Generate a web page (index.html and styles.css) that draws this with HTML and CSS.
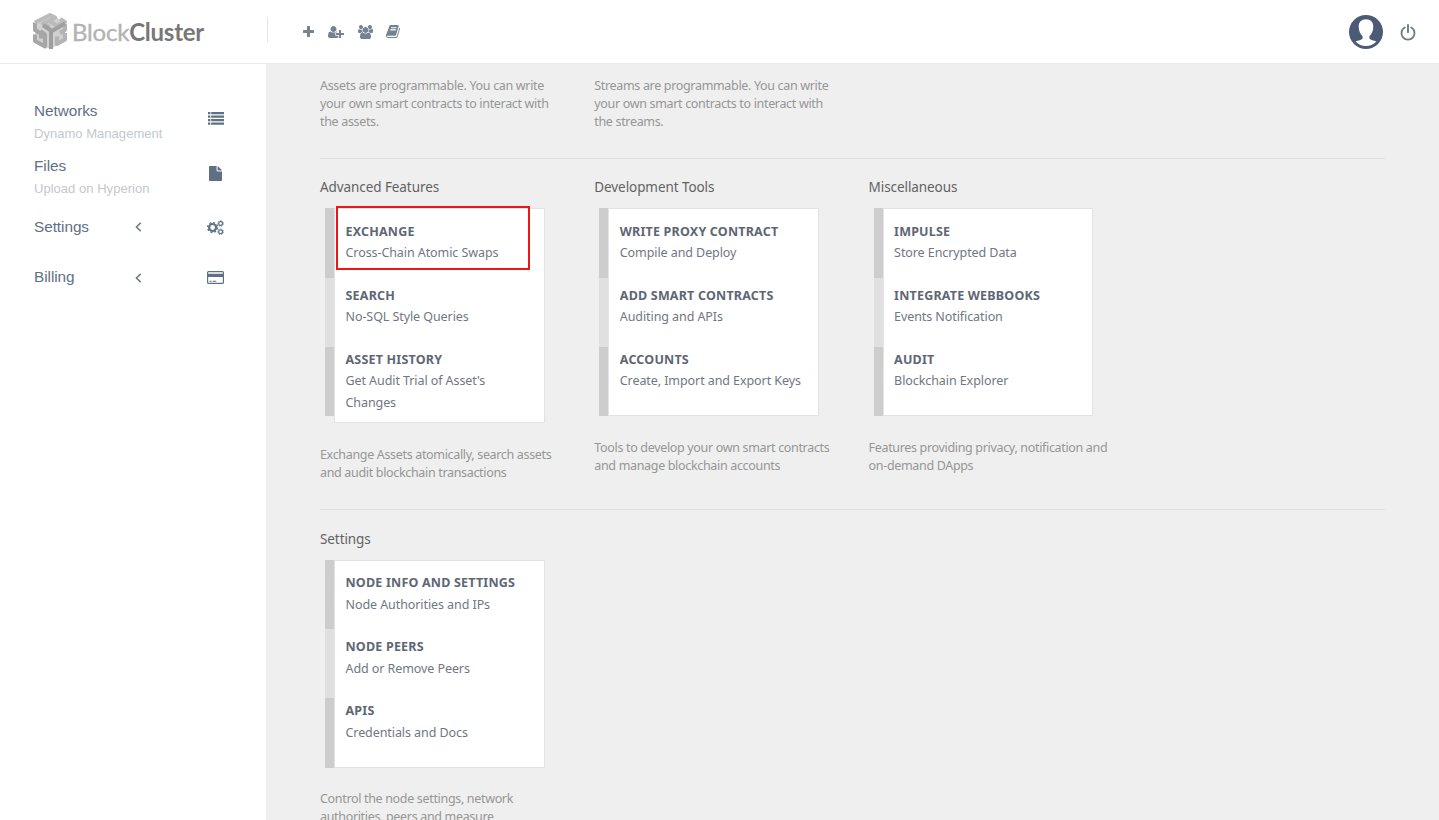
FILE: index.html
```html
<!DOCTYPE html>
<html lang="en">
<head>
<meta charset="utf-8">
<title>BlockCluster</title>
<link rel="stylesheet" href="styles.css">
</head>
<body>
<header class="topbar">
  <a class="logo">
    <svg class="cube" viewBox="0 0 34 38">
      <path fill="#d0d0d0" d="M17 1 32 9v19L17 36 2 28V9z"/>
      <g fill="none" stroke-width="4" stroke-linejoin="round">
        <path stroke="#a6a6a6" d="M2 9.500V17l6 3.500v5M2 21.500V28l10 5.500v-12L7.500 18"/>
        <path stroke="#b3b3b3" d="M24 23.500V31l8-4.500V20M32 11v6l-5 3"/>
        <path stroke="#bababa" d="M2 9.500 17 2l5 2.500-12 6L17 14M17 8.500l6.500 4L32 9l-5-3"/>
        <path stroke="#9f9f9f" d="M10 12l8 5.500V36M32 10.500 18 18.500"/>
      </g>
    </svg>
    <span class="word"><span class="word-light">Block</span><span class="word-dark">Cluster</span></span>
  </a>
  <nav class="tools">
    <svg class="t-plus" viewBox="192 128 1408 1408"><path d="M1600 736v192q0 40-28 68t-68 28h-416v416q0 40-28 68t-68 28h-192q-40 0-68-28t-28-68v-416h-416q-40 0-68-28t-28-68v-192q0-40 28-68t68-28h416v-416q0-40 28-68t68-28h192q40 0 68 28t28 68v416h416q40 0 68 28t28 68z"/></svg>
    <svg class="t-userplus" viewBox="0 128 2048 1536"><path d="M704 896q-159 0-271.500-112.500t-112.500-271.500 112.500-271.500 271.500-112.500 271.500 112.500 112.500 271.500-112.500 271.500-271.500 112.500zm960 128h352q13 0 22.500 9.500t9.500 22.500v192q0 13-9.500 22.500t-22.500 9.500h-352v352q0 13-9.500 22.500t-22.500 9.500h-192q-13 0-22.500-9.500t-9.500-22.500v-352h-352q-13 0-22.500-9.500t-9.500-22.500v-192q0-13 9.500-22.500t22.500-9.500h352v-352q0-13 9.500-22.500t22.500-9.500h192q13 0 22.500 9.500t9.500 22.500v352zm-736 224q0 52 38 90t90 38h256v238q-68 50-171 50h-874q-121 0-194-69t-73-190q0-53 3.500-103.500t14-109 26.500-108.500 43-97.500 62-81 85.500-53.500 111.500-20q19 0 39 17 79 61 154.500 91.500t164.500 30.500 164.500-30.500 154.500-91.500q20-17 39-17 132 0 217 96h-223q-52 0-90 38t-38 90v192z"/></svg>
    <svg class="t-users" viewBox="0 0 1920 1792"><path d="M593 896q-162 5-265 128h-134q-82 0-138-40.500t-56-118.500q0-353 124-353 6 0 43.500 21t97.500 42.500 119 21.500q67 0 133-23-5 37-5 66 0 159 93 293zm1071 637q0 120-73 189.500t-194 69.500h-874q-121 0-194-69.500t-73-189.500q0-53 3.500-103.500t14-109 26.500-108.500 43-97.500 62-81 85.500-53.500 111.500-20q10 0 43 21.500t73 48 107 48 135 21.500 135-21.500 107-48 73-48 43-21.500q61 0 111.500 20t85.500 53.500 62 81 43 97.500 26.500 108.500 14 109 3.500 103.500zm-1024-1277q0 106-75 181t-181 75-181-75-75-181 75-181 181-75 181 75 75 181zm704 384q0 159-112.500 271.500t-271.500 112.500-271.500-112.500-112.500-271.500 112.500-271.500 271.500-112.500 271.500 112.500 112.500 271.500zm576 225q0 78-56 118.500t-138 40.500h-134q-103-123-265-128 93-134 93-293 0-29-5-66 66 23 133 23 59 0 119-21.500t97.500-42.500 43.500-21q124 0 124 353zm-128-609q0 106-75 181t-181 75-181-75-75-181 75-181 181-75 181 75 75 181z"/></svg>
    <svg class="t-book" viewBox="0 128 1664 1536"><path d="M1639 478q40 57 18 129l-275 906q-19 64-76.500 107.500t-122.500 43.500h-923q-77 0-148.500-53.500t-99.500-131.500q-24-67-2-127 0-4 3-27t4-37q1-8-3-21.500t-3-19.500q2-11 8-21t16.500-23.500 16.500-23.500q23-38 45-91.500t30-91.500q3-10 .5-30t-.5-28q3-11 17-28t17-23q21-36 42-92t25-90q1-9-2.500-32t.5-28q4-13 22-30.500t22-22.500q19-26 42.500-84.500t27.500-96.500q1-8-3-25.500t-2-26.500q2-8 9-18t18-23 17-21q8-12 16.500-30.500t15-35 16-36 19.500-32 26.500-23.500 36-11.500 47.500 5.500l-1 3q38-9 51-9h761q74 0 114 56t18 130l-274 906q-36 119-71.500 153.500t-128.500 34.500h-869q-27 0-38 15-11 16-1 43 24 70 144 70h923q29 0 56-15.500t35-41.500l300-987q7-22 5-57 38 15 59 43zm-1064 2q-4 13 2 22.500t20 9.500h608q13 0 25.500-9.500t16.500-22.500l21-64q4-13-2-22.500t-20-9.500h-608q-13 0-25.500 9.500t-16.500 22.500zm-83 256q-4 13 2 22.500t20 9.500h608q13 0 25.500-9.500t16.500-22.500l21-64q4-13-2-22.500t-20-9.500h-608q-13 0-25.500 9.500t-16.500 22.500z"/></svg>
  </nav>
  <div class="account">
    <svg class="avatar" viewBox="0 0 34 34"><circle cx="17" cy="17" r="17" fill="#4b5b76"/><path fill="#fff" d="M17 4.300c-4.600 0-7.300 3-7.300 7.200 0 4.600 1.700 7.400 3.900 9.800v2.300c-1.200 1.900-4.300 1.900-7 2.800 2.200 2.600 6 4.500 10.400 4.500s8.200-1.900 10.400-4.500c-2.700-.9-5.800-.9-7-2.800v-2.300c2.200-2.400 3.900-5.200 3.900-9.800 0-4.200-2.700-7.200-7.300-7.200z"/></svg>
    <svg class="power" viewBox="0 0 16 17"><path d="M4.700 3.500a6.500 6.500 0 1 0 6.600 0M8 1v7.300" fill="none" stroke="#6d7b8c" stroke-width="1.900" stroke-linecap="round"/></svg>
  </div>
</header>
<div class="page">
  <aside class="sidebar">
    <a class="nav nav-double">
      <span class="nav-label">Networks<small>Dynamo Management</small></span>
      <svg class="i-list" viewBox="0 0 16 13"><path d="M0 0h2.400v2.200H0zM3.200 0H16v2.200H3.200zM0 3.500h2.400v2.200H0zM3.200 3.500H16v2.200H3.200zM0 7h2.400v2.200H0zM3.200 7H16v2.200H3.200zM0 10.500h2.400v2.200H0zM3.200 10.500H16v2.200H3.200z"/></svg>
    </a>
    <a class="nav nav-double">
      <span class="nav-label">Files<small>Upload on Hyperion</small></span>
      <svg class="i-file" viewBox="0 0 13 15"><path d="M.8 0H7.600V4.600q0 .8.800.8H13V14.200q0 .8-.8.800H.8q-.8 0-.8-.8V.8Q0 0 .8 0zM8.600.1q.3.100.6.400l3.300 3.300q.3.300.4.600H8.600z"/></svg>
    </a>
    <a class="nav nav-single">
      <span class="nav-label">Settings</span>
      <svg class="chev" viewBox="0 0 7 10"><path d="M5.700.9 1.400 5l4.300 4.100"/></svg>
      <svg class="i-cogs" viewBox="0 0 17 15"><g fill="none"><circle cx="5.600" cy="7.500" r="3.500" stroke-width="2.200"/><circle cx="5.600" cy="7.500" r="5" stroke-width="1.300" stroke-dasharray="1.960 1.960"/><circle cx="13.600" cy="3.500" r="1.900" stroke-width="1.200"/><circle cx="13.600" cy="3.500" r="2.800" stroke-width=".9" stroke-dasharray="1.250 1.260"/><circle cx="13.600" cy="11.700" r="1.900" stroke-width="1.200"/><circle cx="13.600" cy="11.700" r="2.800" stroke-width=".9" stroke-dasharray="1.250 1.260"/></g></svg>
    </a>
    <a class="nav nav-single">
      <span class="nav-label">Billing</span>
      <svg class="chev" viewBox="0 0 7 10"><path d="M5.700.9 1.400 5l4.300 4.100"/></svg>
      <svg class="i-card" viewBox="0 0 17 13"><path fill-rule="evenodd" d="M1.500 0h14Q17 0 17 1.500v10q0 1.500-1.500 1.500h-14Q0 13 0 11.500v-10Q0 0 1.500 0zM1.200 1.200v1.600h14.600V1.200zM1.200 6v5.800h14.600V6zM2.400 9.700h2.200v1.100H2.400zM5.600 9.700h3.600v1.100H5.600z"/></svg>
    </a>
  </aside>
  <main class="content">
    <section class="row row-intro">
      <div class="col"><p class="desc">Assets are programmable. You can write<br>your own smart contracts to interact with<br>the assets.</p></div>
      <div class="col"><p class="desc">Streams are programmable. You can write<br>your own smart contracts to interact with<br>the streams.</p></div>
    </section>
    <section class="row row-features">
      <div class="col">
        <h2>Advanced Features</h2>
        <div class="panel"><div class="rail"><i></i><i></i><i></i></div>
          <div class="card">
            <div class="item marked"><b>Exchange</b><span>Cross-Chain Atomic Swaps</span></div>
            <div class="item"><b>Search</b><span>No-SQL Style Queries</span></div>
            <div class="item"><b>Asset History</b><span>Get Audit Trial of Asset's<br>Changes</span></div>
          </div></div>
        <p class="desc">Exchange Assets atomically, search assets<br>and audit blockchain transactions</p>
      </div>
      <div class="col">
        <h2>Development Tools</h2>
        <div class="panel"><div class="rail"><i></i><i></i><i></i></div>
          <div class="card">
            <div class="item"><b>Write Proxy Contract</b><span>Compile and Deploy</span></div>
            <div class="item"><b>Add Smart Contracts</b><span>Auditing and APIs</span></div>
            <div class="item"><b>Accounts</b><span>Create, Import and Export Keys</span></div>
          </div></div>
        <p class="desc">Tools to develop your own smart contracts<br>and manage blockchain accounts</p>
      </div>
      <div class="col">
        <h2>Miscellaneous</h2>
        <div class="panel"><div class="rail"><i></i><i></i><i></i></div>
          <div class="card">
            <div class="item"><b>Impulse</b><span>Store Encrypted Data</span></div>
            <div class="item"><b>Integrate Webbooks</b><span>Events Notification</span></div>
            <div class="item"><b>Audit</b><span>Blockchain Explorer</span></div>
          </div></div>
        <p class="desc">Features providing privacy, notification and<br>on-demand DApps</p>
      </div>
    </section>
    <section class="row">
      <div class="col">
        <h2>Settings</h2>
        <div class="panel"><div class="rail"><i></i><i></i><i></i></div>
          <div class="card">
            <div class="item"><b>Node Info and Settings</b><span>Node Authorities and IPs</span></div>
            <div class="item"><b>Node Peers</b><span>Add or Remove Peers</span></div>
            <div class="item"><b>APIs</b><span>Credentials and Docs</span></div>
          </div></div>
        <p class="desc">Control the node settings, network<br>authorities, peers and measure</p>
      </div>
    </section>
  </main>
</div>
</body>
</html>
```
FILE: styles.css
```css
*, *::after { box-sizing: border-box; }
body { margin: 0; height: 820px; overflow: hidden; display: flex; flex-direction: column; background: #fff; font-family: "Noto Sans", sans-serif; }
svg { display: block; flex: none; }

.topbar { flex: none; height: 64px; border-bottom: 1px solid #ebebeb; display: flex; align-items: center; padding: 0 23px 0 33px; }
.logo { width: 234.500px; height: 25px; border-right: 1px solid #e4e4e4; display: flex; align-items: center; margin-bottom: 4px; }
.cube { width: 34px; height: 38px; margin-top: 5px; }
.word { font: 24px/28px Lato, sans-serif; letter-spacing: -.2px; margin: 5px 0 0 5px; }
.word-light { color: #b3b3b3; -webkit-text-stroke: .4px #b3b3b3; }
.word-dark { color: #777; font-weight: 700; letter-spacing: -.25px; }
.tools { display: flex; align-items: center; fill: #74838f; padding-left: 35px; }
.t-plus { width: 11px; height: 11px; margin-top: -1px; }
.t-userplus { width: 16px; height: 12px; margin: 0 0 0 14px; }
.t-users { width: 15px; height: 14px; margin-left: 14px; }
.t-book { width: 14px; height: 13px; margin-left: 13px; }
.account { margin-left: auto; display: flex; align-items: center; gap: 17px; }
.avatar { width: 34px; height: 34px; }
.power { width: 16px; height: 17px; margin-top: 2px; }

.page { flex: 1; min-height: 0; display: flex; }
.sidebar { flex: none; width: 266px; padding: 36px 42px 0 34px; font: 15.300px/22px "Liberation Sans", sans-serif; letter-spacing: -.04px; color: #5f7085; fill: #5f7085; stroke: none; }
.nav { display: flex; align-items: center; }
.nav-double { height: 54.500px; align-items: flex-start; }
.nav-label { flex: 1; }
.nav-label small { display: block; font-size: 13px; line-height: 24.300px; letter-spacing: .03px; color: #c3c8cf; }
.i-list { width: 16px; height: 13px; margin: 12px .5px 0 0; }
.i-file { width: 13px; height: 15px; margin: 11px 2px 0 0; }
.nav-single { height: 50.500px; align-items: flex-start; padding-top: 6.500px; }
.nav-single .nav-label { flex: none; width: 101px; }
.chev { width: 7px; height: 10px; margin-top: 6.500px; fill: none; stroke: #69798c; stroke-width: 1.500; }
.i-cogs { width: 17px; height: 15px; margin: 4px 0 0 auto; stroke: #5f7085; }
.i-card { width: 17px; height: 13px; margin: 5px 0 0 auto; }

.content { flex: 1; background: #efefef; padding: 12px 54px 0; overflow: hidden; }
.row { display: flex; }
.row + .row { border-top: 1px solid #e0e0e0; padding-top: 18.400px; }
.row-intro { height: 82px; padding-top: 1px; }
.row-features { height: 351.400px; }
.col { flex: none; width: 274.300px; white-space: nowrap; }
h2 { margin: 0; font-size: 13.500px; line-height: 20px; font-weight: 400; letter-spacing: -.08px; color: #626262; }
.panel { display: flex; align-items: flex-start; margin: 11px 0 22.500px 5px; }
.rail { width: 9px; }
.rail i { display: block; height: 69.300px; background: #cdcdcd; }
.rail i:nth-child(2) { background: #e0e0e0; }
.card { width: 210.500px; min-height: 208px; background: #fff; border: 1px solid #e3e3e3; padding: 11.600px 10px 9px 10.500px; display: flex; flex-direction: column; gap: 21px; }
.item { position: relative; font-size: 12.500px; line-height: 21.500px; letter-spacing: -.08px; color: #6f7782; }
.item b { display: block; text-transform: uppercase; font-weight: 700; letter-spacing: .2px; color: #5e6675; }
.item span { display: block; }
.marked::after { content: ""; position: absolute; left: -9.500px; top: -14.600px; width: 194px; height: 64px; border: 2px solid #f01515; }
.desc { margin: 0; font-size: 12.500px; line-height: 18.200px; letter-spacing: -.33px; color: #969696; }
```
